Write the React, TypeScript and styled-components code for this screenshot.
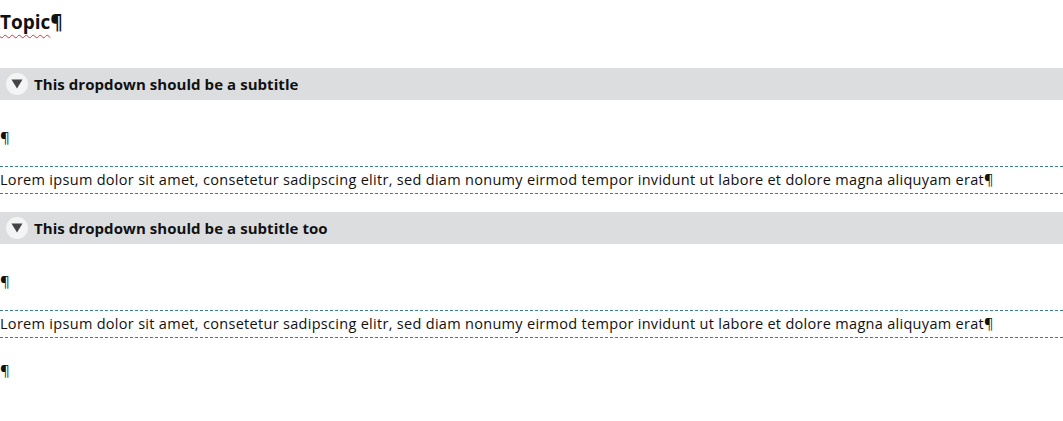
import React from "react";
import styled, { createGlobalStyle } from "styled-components";

const GlobalStyle = createGlobalStyle`
  html, body {
    margin: 0;
    padding: 0;
    background: #ffffff;
  }
  body {
    font-family: "Open Sans", "Noto Sans", "Liberation Sans", sans-serif;
    color: #111111;
  }
`;

const Page = styled.div`
  display: flex;
  flex-direction: column;
  width: 1063px;
`;

const Title = styled.h1`
  margin: 0 0 24px 0;
  font-size: 19px;
  font-weight: 700;
  line-height: 44px;
`;

const Misspelled = styled.span`
  text-decoration: underline wavy #d23a3a;
  text-decoration-thickness: 1px;
  text-underline-offset: 5px;
`;

const Pilcrow = styled.span<{ bold?: boolean }>`
  font-weight: ${(p) => (p.bold ? 700 : 400)};
  color: #111;
`;

const Bar = styled.div`
  display: flex;
  align-items: center;
  gap: 6px;
  height: 32px;
  padding-left: 6px;
  background: #dcdddf;
`;

const Toggle = styled.span`
  display: flex;
  align-items: center;
  justify-content: center;
  width: 22px;
  height: 22px;
  border-radius: 50%;
  background: #f4f4f5;
`;

const BarTitle = styled.span`
  font-size: 15px;
  font-weight: 700;
  color: #111;
  letter-spacing: 0.06px;
`;

const EmptyPara = styled.p<{ top: number; bottom: number }>`
  margin: 0;
  padding: ${(p) => p.top}px 0 ${(p) => p.bottom}px 0;
  font-size: 15px;
  line-height: 22px;
`;

const TextPara = styled.p`
  margin: 0;
  height: 26px;
  line-height: 26px;
  border-top: 1px dashed #3a7f98;
  border-bottom: 1px dashed #3a7f98;
  font-size: 14.5px;
  letter-spacing: 0.3px;
  white-space: nowrap;
`;

const Section = styled.section`
  display: flex;
  flex-direction: column;
  margin-bottom: 18px;
`;

const Triangle = () => (
  <svg width="12" height="10" viewBox="0 0 12 10">
    <path d="M0.5 0.5 H11.5 L6 9.5 Z" fill="#444446" />
  </svg>
);

const lorem =
  "Lorem ipsum dolor sit amet, consetetur sadipscing elitr, sed diam nonumy eirmod tempor invidunt ut labore et dolore magna aliquyam erat";

const Dropdown = ({ title }: { title: string }) => (
  <Section>
    <Bar>
      <Toggle>
        <Triangle />
      </Toggle>
      <BarTitle>{title}</BarTitle>
    </Bar>
    <EmptyPara top={26} bottom={18}>
      <Pilcrow>¶</Pilcrow>
    </EmptyPara>
    <TextPara>
      {lorem}
      <Pilcrow>¶</Pilcrow>
    </TextPara>
  </Section>
);

export default function App() {
  return (
    <>
      <GlobalStyle />
      <Page>
        <Title>
          <Misspelled>Topic</Misspelled>
          <Pilcrow bold>¶</Pilcrow>
        </Title>
        <Dropdown title="This dropdown should be a subtitle" />
        <Dropdown title="This dropdown should be a subtitle too" />
        <EmptyPara top={3} bottom={10}>
          <Pilcrow>¶</Pilcrow>
        </EmptyPara>
      </Page>
    </>
  );
}
